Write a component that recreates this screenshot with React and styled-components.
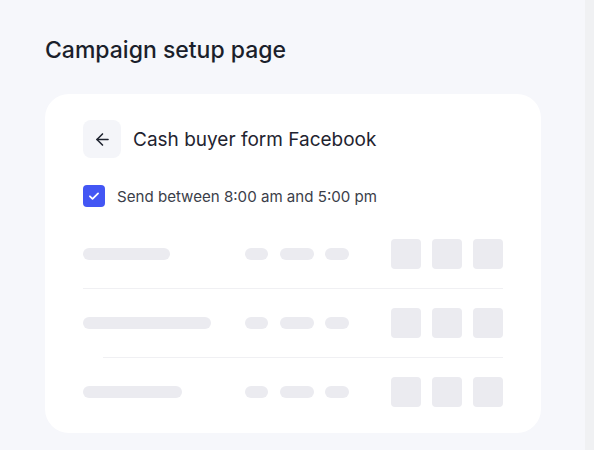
import React from "react";
import styled, { createGlobalStyle } from "styled-components";

const Global = createGlobalStyle`
  html, body {
    margin: 0;
    padding: 0;
    background: #f6f7fb;
    font-family: Inter, "Noto Sans", sans-serif;
  }
`;

const rows = [
  { bar: 87, divider: 0 },
  { bar: 128, divider: 20 },
  { bar: 99, divider: null },
];

function App() {
  return (
    <>
      <Global />
      <Page>
        <Main>
          <Title>Campaign setup page</Title>
          <Card>
            <Header>
              <BackButton>
                <svg width="19" height="19" viewBox="0 0 24 24" fill="none" stroke="#1f2430" strokeWidth="2" strokeLinecap="round" strokeLinejoin="round">
                  <path d="M19 12H5" />
                  <path d="M12 19l-7-7 7-7" />
                </svg>
              </BackButton>
              <Heading>Cash buyer form Facebook</Heading>
            </Header>
            <CheckRow>
              <Check>
                <svg width="14" height="14" viewBox="0 0 24 24" fill="none" stroke="#fff" strokeWidth="3" strokeLinecap="round" strokeLinejoin="round">
                  <path d="M5 12.5l4.5 4.5L19 7.5" />
                </svg>
              </Check>
              <CheckLabel>Send between 8:00 am and 5:00 pm</CheckLabel>
            </CheckRow>
            <List>
              {rows.map((r, i) => (
                <React.Fragment key={i}>
                  <Row>
                    <Bar style={{ width: r.bar }} />
                    <Pills>
                      <Pill $w={23} />
                      <Pill $w={34} />
                      <Pill $w={24} />
                    </Pills>
                    <Squares>
                      <Square />
                      <Square />
                      <Square />
                    </Squares>
                  </Row>
                  {r.divider !== null && <Divider $indent={r.divider} />}
                </React.Fragment>
              ))}
            </List>
          </Card>
        </Main>
        <Strip />
      </Page>
    </>
  );
}

export default App;

const Page = styled.div`
  display: flex;
  height: 450px;
  overflow: hidden;
`;

const Main = styled.div`
  flex: 1;
  padding: 36px 44px 0 45px;
`;

const Strip = styled.div`
  width: 9px;
  background: #f0f1f3;
`;

const Title = styled.h1`
  margin: 0 0 30px;
  font-size: 23px;
  line-height: 28px;
  font-weight: 500;
  color: #1b1f2b;
`;

const Card = styled.div`
  width: 496px;
  box-sizing: border-box;
  background: #fff;
  border-radius: 24px;
  padding: 26px 38px 26px;
`;

const Header = styled.div`
  display: flex;
  align-items: center;
  gap: 12px;
`;

const BackButton = styled.div`
  width: 38px;
  height: 38px;
  border-radius: 8px;
  background: #f4f5f9;
  display: flex;
  align-items: center;
  justify-content: center;
`;

const Heading = styled.div`
  font-size: 19px;
  font-weight: 400;
  color: #1f2430;
`;

const CheckRow = styled.div`
  display: flex;
  align-items: center;
  gap: 12px;
  margin-top: 27px;
`;

const Check = styled.div`
  width: 22px;
  height: 22px;
  border-radius: 4px;
  background: #4356f4;
  display: flex;
  align-items: center;
  justify-content: center;
`;

const CheckLabel = styled.div`
  font-size: 15.1px;
  color: #3b3e49;
`;

const List = styled.div`
  margin-top: 32px;
`;

const Row = styled.div`
  display: flex;
  align-items: center;
  height: 30px;
`;

const Bar = styled.div`
  height: 12px;
  border-radius: 6px;
  background: #ebebf0;
`;

const Pills = styled.div`
  display: flex;
  gap: 11.5px;
  margin-left: auto;
  margin-right: 42px;
`;

const Pill = styled.div`
  width: ${(p) => p.$w}px;
  height: 12px;
  border-radius: 6px;
  background: #ebebf0;
`;

const Squares = styled.div`
  display: flex;
  gap: 11px;
`;

const Square = styled.div`
  width: 30px;
  height: 30px;
  border-radius: 4px;
  background: #ebebf0;
`;

const Divider = styled.div`
  height: 1px;
  background: #f0f0f3;
  margin: 19px 0 19px ${(p) => p.$indent}px;
`;
